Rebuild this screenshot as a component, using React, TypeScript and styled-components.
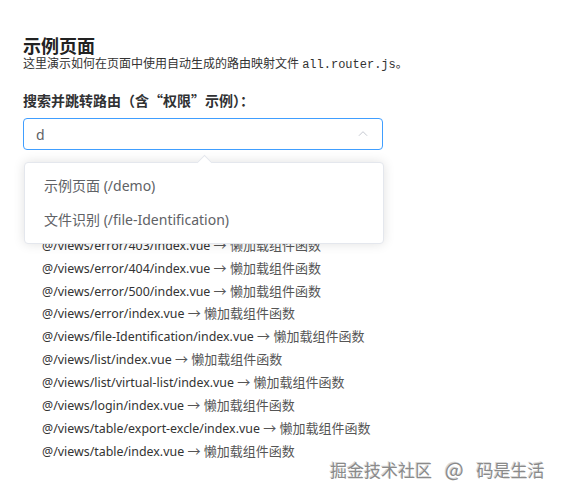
import React from "react";
import styled, { createGlobalStyle } from "styled-components";

const GlobalStyle = createGlobalStyle`
  html, body {
    margin: 0;
    padding: 0;
    background: #ffffff;
  }
  body {
    font-family: "Noto Sans", "Noto Sans CJK SC", sans-serif;
    color: #303133;
  }
`;

const Page = styled.div`
  position: relative;
  width: 562px;
  height: 498px;
  padding: 34px 23px 0 23px;
  box-sizing: border-box;
  overflow: hidden;
`;

const Title = styled.h2`
  margin: 0;
  font-family: "Noto Sans CJK SC", sans-serif;
  font-size: 18px;
  line-height: 22px;
  font-weight: 700;
  color: #222;
`;

const Intro = styled.p`
  margin: 0;
  font-size: 12px;
  line-height: 16px;
  color: #333;
`;

const Code = styled.code`
  font-family: "Liberation Mono", monospace;
  font-size: 12px;
`;

const Label = styled.div`
  margin-top: 17px;
  font-family: "Noto Sans CJK SC", sans-serif;
  font-size: 14px;
  line-height: 20px;
  font-weight: 700;
  color: #303133;
`;

const SelectWrap = styled.div`
  position: relative;
  margin-top: 8px;
  width: 360px;
`;

const Input = styled.div`
  box-sizing: border-box;
  height: 32px;
  border: 1px solid #409eff;
  border-radius: 4px;
  display: flex;
  align-items: center;
  justify-content: space-between;
  padding: 0 12px 0 12px;
  font-size: 14px;
  color: #606266;
`;

const Chevron = styled.svg`
  width: 14px;
  height: 14px;
  color: #c0c4cc;
`;

const Dropdown = styled.div`
  position: absolute;
  top: 44px;
  left: 1px;
  width: 360px;
  box-sizing: border-box;
  background: #fff;
  border: 1px solid #e4e7ed;
  border-radius: 4px;
  box-shadow: 0 0 12px rgba(0, 0, 0, 0.12);
  padding: 6px 0;
  z-index: 2;
`;

const Arrow = styled.span`
  position: absolute;
  top: -6px;
  left: 174px;
  width: 10px;
  height: 10px;
  background: #fff;
  border-top: 1px solid #e4e7ed;
  border-left: 1px solid #e4e7ed;
  transform: rotate(45deg);
`;

const Option = styled.div`
  height: 34px;
  line-height: 34px;
  padding: 0 32px 0 19px;
  font-size: 14px;
  color: #606266;
`;

const RouteList = styled.ul`
  list-style: none;
  margin: 39px 0 0 0;
  padding: 0 0 0 19px;
`;

const RouteItem = styled.li`
  height: 22.9px;
  font-size: 12.4px;
  line-height: 22.9px;
  color: #333;
  white-space: nowrap;
`;

const Lazy = styled.span`
  font-size: 13px;
  line-height: 1;
  color: #555;
`;

const Watermark = styled.div`
  position: absolute;
  left: 330px;
  top: 458px;
  font-size: 17px;
  line-height: 24px;
  word-spacing: 9px;
  color: #8a8a8a;
  text-shadow: 1px 1px 0 #fff, -1px -1px 0 #d8d8d8;
  font-family: "Noto Sans CJK SC", sans-serif;
`;

const At = styled.span`
  font-size: 20px;
  line-height: 1;
`;

const routes = [
  "@/views/demo/index.vue",
  "@/views/error/401/index.vue",
  "@/views/error/403/index.vue",
  "@/views/error/404/index.vue",
  "@/views/error/500/index.vue",
  "@/views/error/index.vue",
  "@/views/file-Identification/index.vue",
  "@/views/list/index.vue",
  "@/views/list/virtual-list/index.vue",
  "@/views/login/index.vue",
  "@/views/table/export-excle/index.vue",
  "@/views/table/index.vue",
];

const options = ["示例页面 (/demo)", "文件识别 (/file-Identification)"];

export default function App() {
  return (
    <>
      <GlobalStyle />
      <Page>
        <Title>示例页面</Title>
        <Intro>
          这里演示如何在页面中使用自动生成的路由映射文件 <Code>all.router.js</Code>。
        </Intro>
        <Label>搜索并跳转路由（含“权限”示例）：</Label>
        <SelectWrap>
          <Input>
            <span>d</span>
            <Chevron viewBox="0 0 24 24" fill="none" stroke="currentColor" strokeWidth="1.6">
              <polyline points="5,15 12,8 19,15" />
            </Chevron>
          </Input>
          <Dropdown>
            <Arrow />
            {options.map((o) => (
              <Option key={o}>{o}</Option>
            ))}
          </Dropdown>
        </SelectWrap>
        <RouteList>
          {routes.map((r) => (
            <RouteItem key={r}>
              {r} <Lazy>→ 懒加载组件函数</Lazy>
            </RouteItem>
          ))}
        </RouteList>
        <Watermark>
          掘金技术社区 <At>@</At> 码是生活
        </Watermark>
      </Page>
    </>
  );
}
